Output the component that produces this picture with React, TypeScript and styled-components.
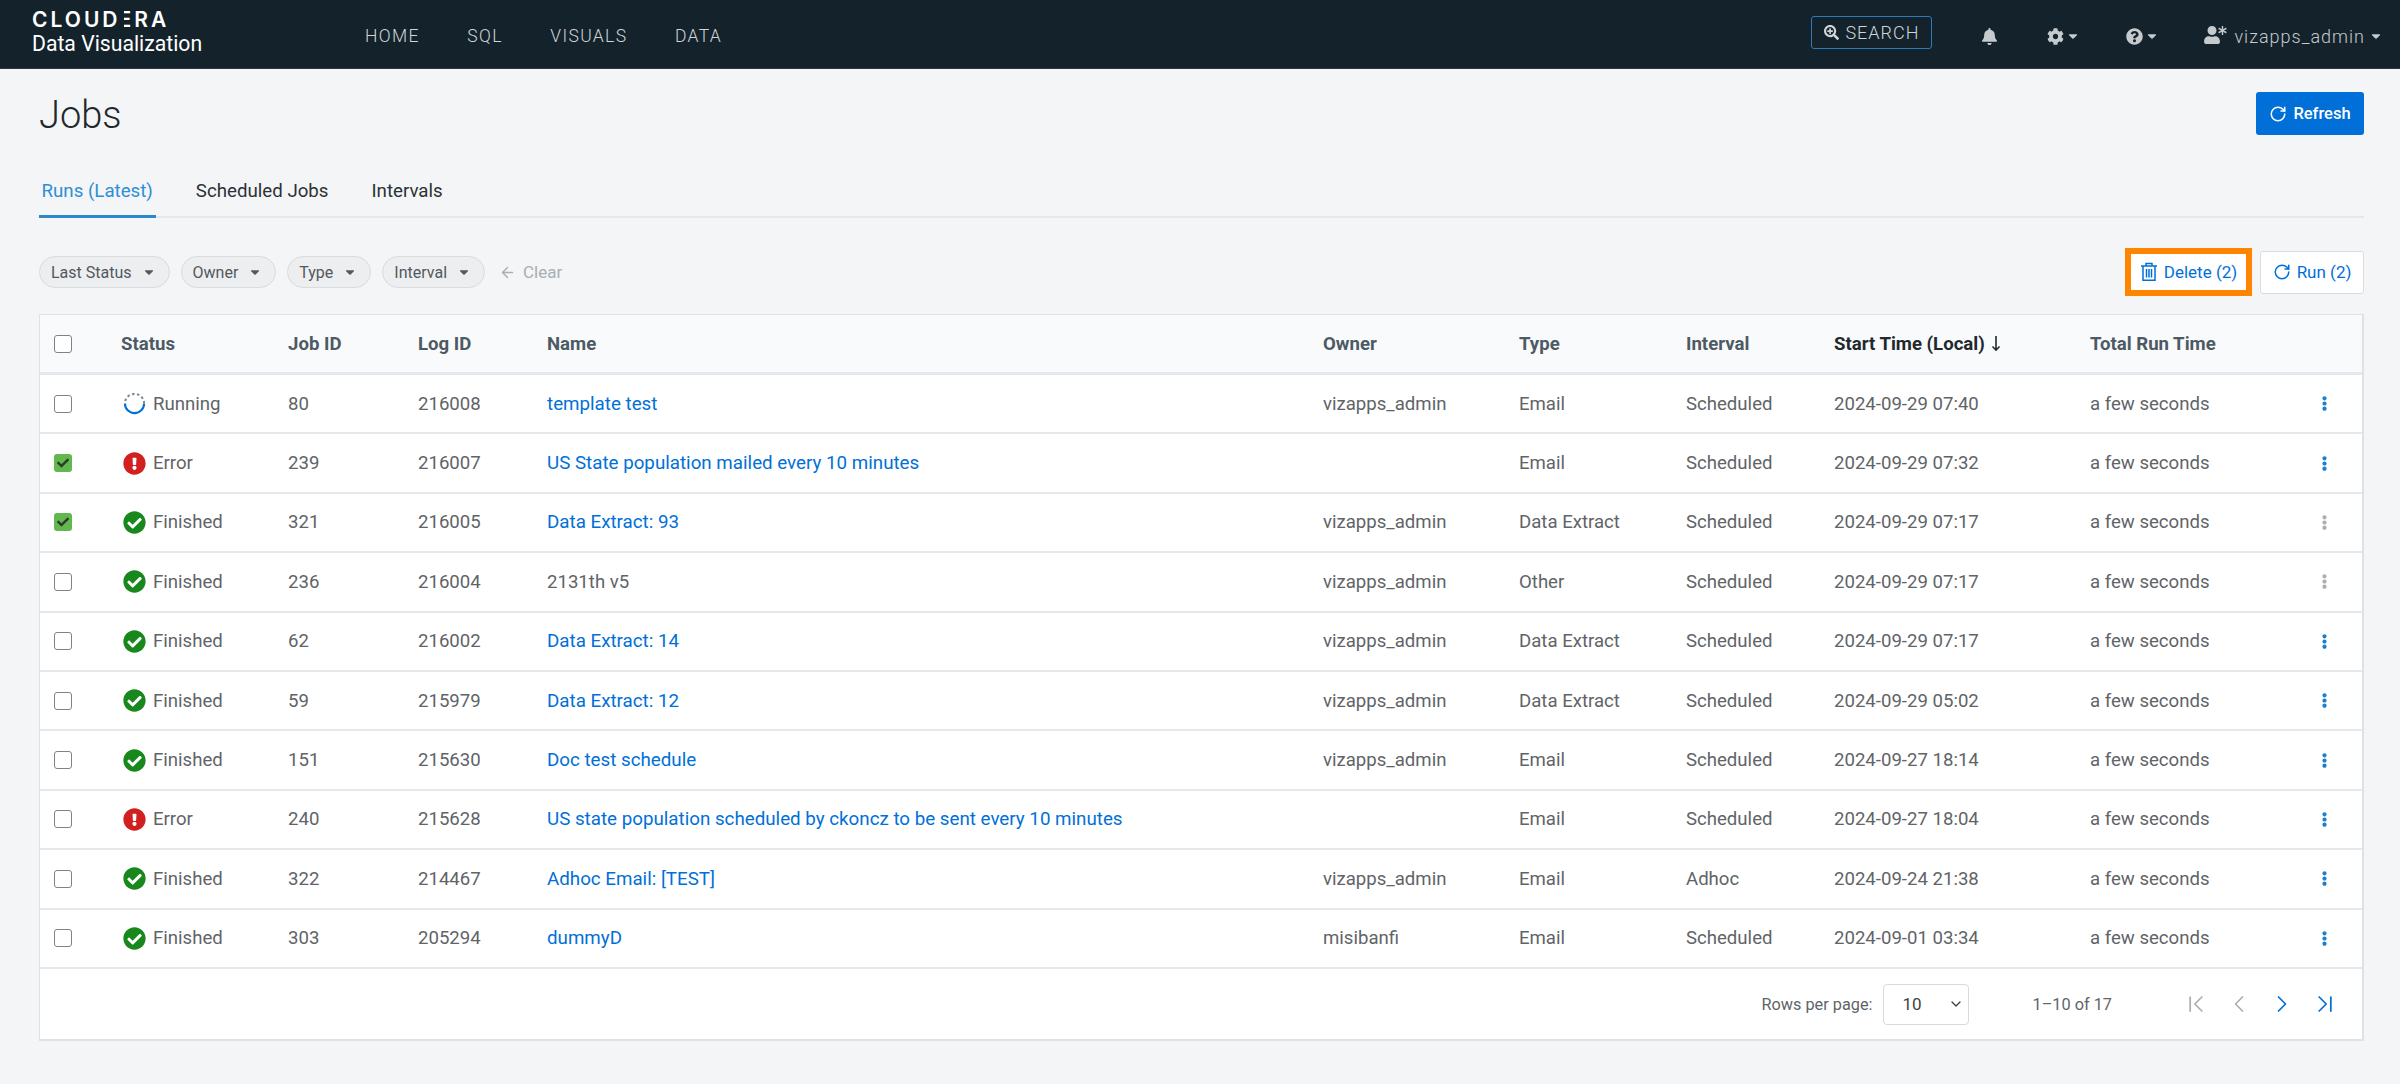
import styled, { createGlobalStyle } from "styled-components";
import { ArrowLeft, ChevronDown, ChevronFirst, ChevronLast, ChevronLeft, ChevronRight, RotateCw } from "lucide-react";
import {
	FaAsterisk,
	FaBell,
	FaCaretDown,
	FaCheck,
	FaCheckCircle,
	FaCog,
	FaEllipsisV,
	FaExclamationCircle,
	FaQuestionCircle,
	FaSearchPlus,
	FaUser,
} from "react-icons/fa";

const GlobalStyle = createGlobalStyle`
	html, body {
		margin: 0;
		padding: 0;
		background: #f4f5f7;
		font-family: Roboto, "Liberation Sans", sans-serif;
		color: #52595e;
	}
`;

const COLUMNS = "81px 167px 130px 129px 776px 196px 167px 148px 256px 190px 1fr";

const Page = styled.div`
	width: 2400px;
	height: 1084px;
	overflow: hidden;
`;

const TopBar = styled.header`
	height: 69px;
	box-sizing: border-box;
	background: #14232b;
	border-bottom: 1px solid #2b3a42;
	display: flex;
	align-items: center;
	padding: 4px 17px 0 32px;
`;

const Brand = styled.div`
	width: 333px;
	margin-top: -7px;
	display: flex;
	flex-direction: column;
	color: #fff;
`;

const BrandName = styled.span`
	font-family: Inter, Roboto, sans-serif;
	font-size: 21px;
	line-height: 22px;
	font-weight: 600;
	letter-spacing: 3px;
`;

const BrandBars = styled.span`
	position: relative;
	margin-left: -2px;

	&::before {
		content: "";
		position: absolute;
		left: 0;
		top: 0;
		bottom: 0;
		width: 5px;
		background: #14232b;
	}
`;

const BrandProduct = styled.span`
	font-size: 21.2px;
	line-height: 26px;
	font-weight: 400;
`;

const Nav = styled.nav`
	display: flex;
	gap: 47.5px;
	flex: 1;
`;

const NavLink = styled.a`
	font-size: 17.5px;
	font-weight: 300;
	letter-spacing: 1.35px;
	color: #d0d5d8;
`;

const SearchBox = styled.div`
	width: 121px;
	height: 33px;
	box-sizing: border-box;
	border: 1px solid #2f7ab8;
	border-radius: 3px;
	display: flex;
	align-items: center;
	justify-content: center;
	gap: 6px;
	font-size: 18px;
	font-weight: 300;
	letter-spacing: 1px;
	color: #d0d5d8;
	margin: 0 49px 8px 0;

	svg {
		font-size: 15px;
	}
`;

const TopIcon = styled.div<{ $gap: number }>`
	display: flex;
	align-items: center;
	gap: 2px;
	margin-right: ${({ $gap }) => $gap}px;
	color: #c5cacd;
	font-size: 17px;
`;

const Caret = styled(FaCaretDown)`
	font-size: 14px;
`;

const UserMenu = styled.div`
	display: flex;
	align-items: center;
	color: #c5cacd;
	font-size: 18px;
	font-weight: 300;
	letter-spacing: 1px;
`;

const UserGlyph = styled.span`
	position: relative;
	width: 31px;
	height: 20px;
	font-size: 18px;

	svg:last-child {
		position: absolute;
		left: 15px;
		top: 0;
		font-size: 9px;
	}
`;

const UserCaret = styled(FaCaretDown)`
	font-size: 14px;
	margin-left: 4px;
`;

const Content = styled.main`
	padding: 0 36px 0 39px;
`;

const TitleRow = styled.div`
	height: 92px;
	display: flex;
	align-items: center;
	justify-content: space-between;
`;

const Title = styled.h1`
	margin: 0;
	font-size: 38px;
	line-height: 44px;
	font-weight: 300;
	color: #22282c;
`;

const RefreshButton = styled.button`
	width: 108px;
	height: 43px;
	margin-bottom: 3px;
	border: 0;
	border-radius: 3px;
	background: #0070d8;
	color: #fff;
	font: 500 16.5px Roboto, sans-serif;
	display: flex;
	align-items: center;
	justify-content: center;
	gap: 6px;
`;

const Tabs = styled.div`
	display: flex;
	gap: 37.5px;
	height: 57px;
	box-sizing: border-box;
	border-bottom: 2px solid #e6e8ea;
`;

const Tab = styled.a<{ $active?: boolean }>`
	padding: 18px 3px 0 2.5px;
	margin-bottom: -2px;
	font-size: 18.7px;
	line-height: 24px;
	color: ${({ $active }) => ($active ? "#2d8fd5" : "#2b3236")};
	border-bottom: ${({ $active }) => ($active ? "3px solid #2d87c9" : "none")};
`;

const FilterRow = styled.div`
	height: 96px;
	box-sizing: border-box;
	padding-top: 12px;
	display: flex;
	align-items: center;
	justify-content: space-between;
`;

const Chips = styled.div`
	display: flex;
	align-items: center;
	gap: 11px;
`;

const Chip = styled.div`
	height: 32px;
	box-sizing: border-box;
	padding: 0 13px 0 11px;
	border: 1px solid #d8dcdf;
	border-radius: 16px;
	background: #eceef0;
	display: flex;
	align-items: center;
	gap: 10px;
	font-size: 16px;
	color: #52595e;

	svg {
		font-size: 14px;
	}
`;

const ClearLink = styled.span`
	display: flex;
	align-items: center;
	gap: 7px;
	margin-left: 3px;
	font-size: 17px;
	color: #a8aeb2;
`;

const Actions = styled.div`
	display: flex;
	align-items: center;
	gap: 13px;
`;

const HighlightedButton = styled.div`
	border: 6px solid #ff8400;
	margin-right: -5px;
`;

const OutlineButton = styled.button<{ $width: number; $framed?: boolean }>`
	width: ${({ $width }) => $width}px;
	height: ${({ $framed }) => ($framed ? 36 : 43)}px;
	box-sizing: border-box;
	padding: 0;
	border: ${({ $framed }) => ($framed ? "0" : "1px solid #dadde0")};
	border-radius: ${({ $framed }) => ($framed ? 0 : 3)}px;
	background: #fff;
	color: #0070d8;
	font: 400 17px Roboto, sans-serif;
	display: flex;
	align-items: center;
	justify-content: center;
	gap: 6px;
`;

const TableCard = styled.section`
	box-sizing: border-box;
	height: 727px;
	background: #fff;
	border: 1px solid #dfe2e5;
	border-width: 1px 2px 2px 1px;
`;

const HeadRow = styled.div`
	height: 60px;
	box-sizing: border-box;
	display: grid;
	grid-template-columns: ${COLUMNS};
	align-items: center;
	background: #f9fafc;
	border-bottom: 3px solid #e4e8ec;
	font-size: 18.6px;
	font-weight: 700;
	color: #4d5a64;
`;

const HeadCell = styled.div<{ $sorted?: boolean }>`
	display: flex;
	align-items: center;
	gap: 6px;
	color: ${({ $sorted }) => ($sorted ? "#22282c" : "#4d5a64")};
`;

const Row = styled.div`
	height: 59.4px;
	box-sizing: border-box;
	display: grid;
	grid-template-columns: ${COLUMNS};
	align-items: center;
	border-bottom: 2px solid #e6e9ec;
	font-size: 18.6px;
	color: #5f6468;
`;

const CheckCell = styled.div`
	padding-left: 14px;
`;

const CheckBox = styled.span<{ $checked?: boolean }>`
	width: 18px;
	height: 18px;
	box-sizing: border-box;
	display: flex;
	align-items: center;
	justify-content: center;
	border-radius: 3px;
	border: ${({ $checked }) => ($checked ? "0" : "1.5px solid #7d8387")};
	background: ${({ $checked }) => ($checked ? "#62b84f" : "#fff")};
	color: #2c3a2a;
	font-size: 12px;
`;

const StatusCell = styled.div`
	display: flex;
	align-items: center;
	gap: 7px;
	padding-left: 2px;
`;

const StatusIcon = styled.span<{ $color: string }>`
	display: flex;
	color: ${({ $color }) => $color};
	font-size: 23px;
`;

const JobLink = styled.a`
	color: #0070d8;
	font-size: 18.75px;
`;

const MoreCell = styled.div<{ $disabled?: boolean }>`
	display: flex;
	justify-content: flex-end;
	padding-right: 30px;
	font-size: 15px;
	color: ${({ $disabled }) => ($disabled ? "#a9afb3" : "#1d7fcb")};
`;

const Footer = styled.div`
	height: 71px;
	display: flex;
	align-items: center;
	justify-content: flex-end;
	padding-right: 23px;
	font-size: 16.3px;
	color: #5f6468;
`;

const PageSizeLabel = styled.span`
	margin-right: 10px;
`;

const PageSize = styled.div`
	width: 86px;
	height: 41px;
	box-sizing: border-box;
	border: 1.5px solid #d4dbe2;
	border-radius: 4px;
	display: flex;
	align-items: center;
	justify-content: space-between;
	padding: 0 4px 0 19px;
	font-size: 17px;
	color: #3c4347;
	margin-right: 64px;
`;

const RangeLabel = styled.span`
	margin-right: 70px;
`;

const Pager = styled.div`
	display: flex;
	gap: 15px;
`;

const PagerButton = styled.span<{ $enabled?: boolean }>`
	display: flex;
	color: ${({ $enabled }) => ($enabled ? "#0070d8" : "#a9afb3")};
`;

type Status = "Running" | "Error" | "Finished";

interface Job {
	status: Status;
	jobId: string;
	logId: string;
	name: string;
	plainName?: boolean;
	owner: string;
	type: string;
	interval: string;
	start: string;
	checked?: boolean;
	menuDisabled?: boolean;
}

const jobs: Job[] = [
	{ status: "Running", jobId: "80", logId: "216008", name: "template test", owner: "vizapps_admin", type: "Email", interval: "Scheduled", start: "2024-09-29 07:40" },
	{ status: "Error", jobId: "239", logId: "216007", name: "US State population mailed every 10 minutes", owner: "", type: "Email", interval: "Scheduled", start: "2024-09-29 07:32", checked: true },
	{ status: "Finished", jobId: "321", logId: "216005", name: "Data Extract: 93", owner: "vizapps_admin", type: "Data Extract", interval: "Scheduled", start: "2024-09-29 07:17", checked: true, menuDisabled: true },
	{ status: "Finished", jobId: "236", logId: "216004", name: "2131th v5", plainName: true, owner: "vizapps_admin", type: "Other", interval: "Scheduled", start: "2024-09-29 07:17", menuDisabled: true },
	{ status: "Finished", jobId: "62", logId: "216002", name: "Data Extract: 14", owner: "vizapps_admin", type: "Data Extract", interval: "Scheduled", start: "2024-09-29 07:17" },
	{ status: "Finished", jobId: "59", logId: "215979", name: "Data Extract: 12", owner: "vizapps_admin", type: "Data Extract", interval: "Scheduled", start: "2024-09-29 05:02" },
	{ status: "Finished", jobId: "151", logId: "215630", name: "Doc test schedule", owner: "vizapps_admin", type: "Email", interval: "Scheduled", start: "2024-09-27 18:14" },
	{ status: "Error", jobId: "240", logId: "215628", name: "US state population scheduled by ckoncz to be sent every 10 minutes", owner: "", type: "Email", interval: "Scheduled", start: "2024-09-27 18:04" },
	{ status: "Finished", jobId: "322", logId: "214467", name: "Adhoc Email: [TEST]", owner: "vizapps_admin", type: "Email", interval: "Adhoc", start: "2024-09-24 21:38" },
	{ status: "Finished", jobId: "303", logId: "205294", name: "dummyD", owner: "misibanfi", type: "Email", interval: "Scheduled", start: "2024-09-01 03:34" },
];

function Spinner() {
	return (
		<svg width="23" height="23" viewBox="0 0 24 24" fill="none" strokeWidth="2.2">
			<path d="M2 12a10 10 0 0 0 20 0" stroke="#0070d8" />
			<path d="M22 12a10 10 0 0 0-20 0" stroke="#7d8a94" strokeDasharray="2.6 2.6" />
		</svg>
	);
}

function TrashIcon() {
	return (
		<svg width="18" height="20" viewBox="0 0 18 20" fill="none" stroke="currentColor" strokeWidth="1.5">
			<path d="M1 4h16M6 4V1.5h6V4M3 4v14.2h12V4M6.5 7v8.5M9 7v8.5M11.5 7v8.5" />
		</svg>
	);
}

function SortArrow() {
	return (
		<svg width="10" height="17" viewBox="0 0 10 17" fill="none" stroke="currentColor" strokeWidth="1.6">
			<path d="M5 1v14M1.5 11.5L5 15.2l3.5-3.7" />
		</svg>
	);
}

function StatusBadge({ status }: { status: Status }) {
	if (status === "Running") {
		return (
			<StatusIcon $color="#0070d8">
				<Spinner />
			</StatusIcon>
		);
	}
	if (status === "Error") {
		return (
			<StatusIcon $color="#d21f1f">
				<FaExclamationCircle />
			</StatusIcon>
		);
	}
	return (
		<StatusIcon $color="#18881c">
			<FaCheckCircle />
		</StatusIcon>
	);
}

export default function App() {
	return (
		<Page>
			<GlobalStyle />
			<TopBar>
				<Brand>
					<BrandName>
						CLOUD<BrandBars>E</BrandBars>RA
					</BrandName>
					<BrandProduct>Data Visualization</BrandProduct>
				</Brand>
				<Nav>
					<NavLink>HOME</NavLink>
					<NavLink>SQL</NavLink>
					<NavLink>VISUALS</NavLink>
					<NavLink>DATA</NavLink>
				</Nav>
				<SearchBox>
					<FaSearchPlus />
					SEARCH
				</SearchBox>
				<TopIcon $gap={49}>
					<FaBell />
				</TopIcon>
				<TopIcon $gap={46}>
					<FaCog />
					<Caret />
				</TopIcon>
				<TopIcon $gap={44}>
					<FaQuestionCircle />
					<Caret />
				</TopIcon>
				<UserMenu>
					<UserGlyph>
						<FaUser />
						<FaAsterisk />
					</UserGlyph>
					vizapps_admin
					<UserCaret />
				</UserMenu>
			</TopBar>
			<Content>
				<TitleRow>
					<Title>Jobs</Title>
					<RefreshButton>
						<RotateCw size={18} />
						Refresh
					</RefreshButton>
				</TitleRow>
				<Tabs>
					<Tab $active>Runs (Latest)</Tab>
					<Tab>Scheduled Jobs</Tab>
					<Tab>Intervals</Tab>
				</Tabs>
				<FilterRow>
					<Chips>
						{["Last Status", "Owner", "Type", "Interval"].map((label) => (
							<Chip key={label}>
								{label}
								<FaCaretDown />
							</Chip>
						))}
						<ClearLink>
							<ArrowLeft size={17} />
							Clear
						</ClearLink>
					</Chips>
					<Actions>
						<HighlightedButton>
							<OutlineButton $width={115} $framed>
								<TrashIcon />
								Delete (2)
							</OutlineButton>
						</HighlightedButton>
						<OutlineButton $width={104}>
							<RotateCw size={18} />
							Run (2)
						</OutlineButton>
					</Actions>
				</FilterRow>
				<TableCard>
					<HeadRow>
						<CheckCell>
							<CheckBox />
						</CheckCell>
						<HeadCell>Status</HeadCell>
						<HeadCell>Job ID</HeadCell>
						<HeadCell>Log ID</HeadCell>
						<HeadCell>Name</HeadCell>
						<HeadCell>Owner</HeadCell>
						<HeadCell>Type</HeadCell>
						<HeadCell>Interval</HeadCell>
						<HeadCell $sorted>
							Start Time (Local)
							<SortArrow />
						</HeadCell>
						<HeadCell>Total Run Time</HeadCell>
					</HeadRow>
					{jobs.map((job) => (
						<Row key={job.logId}>
							<CheckCell>
								<CheckBox $checked={job.checked}>{job.checked && <FaCheck />}</CheckBox>
							</CheckCell>
							<StatusCell>
								<StatusBadge status={job.status} />
								{job.status}
							</StatusCell>
							<div>{job.jobId}</div>
							<div>{job.logId}</div>
							<div>{job.plainName ? job.name : <JobLink>{job.name}</JobLink>}</div>
							<div>{job.owner}</div>
							<div>{job.type}</div>
							<div>{job.interval}</div>
							<div>{job.start}</div>
							<div>a few seconds</div>
							<MoreCell $disabled={job.menuDisabled}>
								<FaEllipsisV />
							</MoreCell>
						</Row>
					))}
					<Footer>
						<PageSizeLabel>Rows per page:</PageSizeLabel>
						<PageSize>
							10
							<ChevronDown size={16} />
						</PageSize>
						<RangeLabel>1–10 of 17</RangeLabel>
						<Pager>
							<PagerButton>
								<ChevronFirst size={28} strokeWidth={1.5} />
							</PagerButton>
							<PagerButton>
								<ChevronLeft size={28} strokeWidth={1.5} />
							</PagerButton>
							<PagerButton $enabled>
								<ChevronRight size={28} strokeWidth={1.5} />
							</PagerButton>
							<PagerButton $enabled>
								<ChevronLast size={28} strokeWidth={1.5} />
							</PagerButton>
						</Pager>
					</Footer>
				</TableCard>
			</Content>
		</Page>
	);
}
